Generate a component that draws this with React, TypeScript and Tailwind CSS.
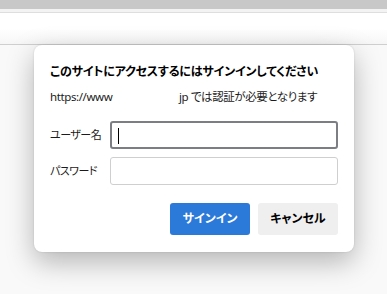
import React from "react";

const jpFont = {
  fontFamily: '"Noto Sans", "Noto Sans CJK JP", sans-serif',
  fontFeatureSettings: '"palt"',
};

function SignInDialog() {
  return (
    <div
      style={jpFont}
      className="ml-[34px] w-[320px] rounded-[8px] bg-white px-4 pt-[18px] pb-[17px] text-[#1b1b1b] shadow-[0_10px_28px_rgba(0,0,0,0.28),0_0_2px_rgba(0,0,0,0.15)]"
    >
      <h1 className="text-[12px] leading-[18px] font-bold tracking-[-0.2px] whitespace-nowrap text-black">
        このサイトにアクセスするにはサインインしてください
      </h1>
      <p className="mt-[8px] flex text-[11.5px] leading-[16px] tracking-[-0.4px] whitespace-nowrap">
        <span className="w-[129px]">https://www</span>
        <span>jp では認証が必要となります</span>
      </p>

      {/* Fields */}
      <div className="mt-[16px] flex flex-col gap-[8px]">
        <label className="flex items-center">
          <span className="w-[60px] text-[11px] tracking-[-0.5px]">ユーザー名</span>
          <div className="relative h-[28px] flex-1 rounded-[3px] border-2 border-[#7b7f84] bg-white">
            <span className="absolute top-[5px] left-[6px] h-[16px] w-px bg-black" />
          </div>
        </label>
        <label className="flex items-center">
          <span className="w-[60px] text-[11px] tracking-[-0.5px]">パスワード</span>
          <div className="h-[28px] flex-1 rounded-[3px] border border-[#cfcfcf] bg-white" />
        </label>
      </div>

      {/* Buttons */}
      <div className="mt-[18px] flex justify-end gap-[8px]">
        <button className="h-[32px] w-[80px] rounded-[3px] bg-[#2b79d8] text-[12px] font-bold text-white">
          サインイン
        </button>
        <button className="h-[32px] w-[80px] rounded-[3px] bg-[#efefef] text-[12px] font-bold text-black">
          キャンセル
        </button>
      </div>
    </div>
  );
}

export default function App() {
  return (
    <div className="h-[294px] w-[387px] overflow-hidden bg-[#f9f9f9]">
      {/* Browser chrome behind the dialog */}
      <div className="h-[9px] bg-[#c8c8c8]" />
      <div className="h-[3px] bg-[#f3f3f3]" />
      <div className="h-[1px] bg-[#dedede]" />
      <div className="h-[31px] bg-gradient-to-b from-white via-white to-[#f6f6f6]" />
      <div className="h-[1px] bg-[#cfcfcf]" />
      <SignInDialog />
    </div>
  );
}
